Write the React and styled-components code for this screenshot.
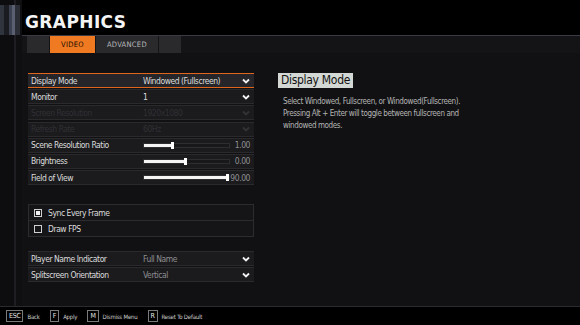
import styled, { createGlobalStyle } from "styled-components";

const GlobalStyle = createGlobalStyle`
    html, body { margin: 0; padding: 0; background: #000; }
    body { font-family: "DejaVu Sans Condensed", "DejaVu Sans", sans-serif; }
`;

const videoRows = [
    { label: "Display Mode", value: "Windowed (Fullscreen)", kind: "select", active: true },
    { label: "Monitor", value: "1", kind: "select" },
    { label: "Screen Resolution", value: "1920x1080", kind: "select", disabled: true },
    { label: "Refresh Rate", value: "60Hz", kind: "select", disabled: true },
    { label: "Scene Resolution Ratio", value: "1.00", kind: "slider", fill: 0.33 },
    { label: "Brightness", value: "0.00", kind: "slider", fill: 0.48 },
    { label: "Field of View", value: "90.00", kind: "slider", fill: 0.98 },
];

const hudRows = [
    { label: "Player Name Indicator", value: "Full Name" },
    { label: "Splitscreen Orientation", value: "Vertical" },
];

const keys = [
    { key: "ESC", text: "Back" },
    { key: "F", text: "Apply" },
    { key: "M", text: "Dismiss Menu" },
    { key: "R", text: "Reset To Default" },
];

function Chevron({ dim }) {
    return (
        <svg width="8" height="6" viewBox="0 0 8 6">
            <polyline points="1,1.5 4,4.5 7,1.5" fill="none" stroke={dim ? "#333336" : "#f2f2f2"} strokeWidth="1.8" />
        </svg>
    );
}

function Row({ row }) {
    return (
        <RowBox $active={row.active}>
            <Label $disabled={row.disabled}>{row.label}</Label>
            {row.kind === "slider" ? (
                <>
                    <Track>
                        <Fill style={{ width: `${row.fill * 100}%` }} />
                        <Knob style={{ left: `${row.fill * 100}%` }} />
                    </Track>
                    <SliderValue>{row.value}</SliderValue>
                </>
            ) : (
                <>
                    <Value $disabled={row.disabled} $muted={row.muted}>{row.value}</Value>
                    <Chevron dim={row.disabled} />
                </>
            )}
        </RowBox>
    );
}

export default function App() {
    return (
        <Page>
            <GlobalStyle />
            <Top>
                <Strip>
                    <StripBands />
                </Strip>
                <Main>
                    <Header>
                        <Title>GRAPHICS</Title>
                    </Header>
                    <Tabs>
                        <Tab $blank />
                        <Tab $active>VIDEO</Tab>
                        <Tab>ADVANCED</Tab>
                        <Tab $blank />
                    </Tabs>
                    <Content>
                        <Options>
                            <Group>
                                {videoRows.map(r => <Row key={r.label} row={r} />)}
                            </Group>

                            <CheckGroup>
                                <CheckRow>
                                    <Box><Dot /></Box>
                                    <Label>Sync Every Frame</Label>
                                </CheckRow>
                                <CheckRow $last>
                                    <Box />
                                    <Label>Draw FPS</Label>
                                </CheckRow>
                            </CheckGroup>

                            <Group $hud>
                                {hudRows.map(r => <Row key={r.label} row={{ ...r, kind: "select", muted: true }} />)}
                            </Group>
                        </Options>

                        <Info>
                            <InfoTitle>Display Mode</InfoTitle>
                            <InfoText>
                                Select Windowed, Fullscreen, or Windowed(Fullscreen). Pressing Alt + Enter will toggle between fullscreen and windowed modes.
                            </InfoText>
                        </Info>
                    </Content>
                </Main>
            </Top>
            <Footer>
                {keys.map(k => (
                    <Hint key={k.key}>
                        <Key>{k.key}</Key>
                        <span>{k.text}</span>
                    </Hint>
                ))}
            </Footer>
        </Page>
    );
}

const Page = styled.div`
    width: 580px;
    height: 325px;
    display: flex;
    flex-direction: column;
    background: #111113;
    overflow: hidden;
`;

const Top = styled.div`
    flex: 1;
    display: flex;
    min-height: 0;
`;

const Strip = styled.div`
    width: 22px;
    flex-shrink: 0;
    display: flex;
    flex-direction: column;
    padding-top: 5px;
    box-sizing: border-box;
    background: linear-gradient(90deg, #0d0d0f 0 14px, #1d1d22 14px 16px, #0f0f11 16px);
`;

const StripBands = styled.div`
    height: 30px;
    background: linear-gradient(90deg, #30343d 0 4px, #1a1c22 4px 9px, #3b4150 9px 12px, #5a6070 12px 15px, #2b2e36 15px 20px, transparent 20px);
`;

const Main = styled.div`
    flex: 1;
    display: flex;
    flex-direction: column;
`;

const Header = styled.div`
    height: 36px;
    box-sizing: border-box;
    background: #000;
    border-bottom: 1px solid #3a3b44;
    display: flex;
    align-items: flex-end;
    padding: 0 0 4px 3px;
`;

const Title = styled.div`
    font-family: "DejaVu Sans", sans-serif;
    font-weight: bold;
    font-size: 17px;
    letter-spacing: 0.4px;
    color: #f4f4f4;
    line-height: 1;
`;

const Tabs = styled.div`
    display: flex;
    gap: 1px;
    padding-left: 5px;
    height: 17px;
    background: #141416;
`;

const Tab = styled.div`
    width: ${p => (p.$blank ? "22px" : "auto")};
    padding: ${p => (p.$blank ? "0" : "0 11px")};
    background: ${p => (p.$active ? "#f07a22" : "#2a2a2d")};
    color: ${p => (p.$active ? "#1a0a00" : "#b8b8b8")};
    font-size: 7.5px;
    letter-spacing: 0.3px;
    display: flex;
    align-items: center;
`;

const Content = styled.div`
    display: flex;
    gap: 24px;
    padding: 20px 0 0 6px;
`;

const Options = styled.div`
    width: 226px;
    display: flex;
    flex-direction: column;
`;

const Group = styled.div`
    display: flex;
    flex-direction: column;
    gap: 1.2px;
    margin-top: ${p => (p.$hud ? "14px" : "0")};
`;

const RowBox = styled.div`
    height: 15px;
    display: flex;
    align-items: center;
    padding: 0 4px 0 3px;
    background: ${p => (p.$active ? "#26262a" : "#1b1b1e")};
    border-top: 1px solid ${p => (p.$active ? "#e0661e" : "#2a2a2d")};
    border-bottom: 1px solid ${p => (p.$active ? "#e0661e" : "#2a2a2d")};
    box-sizing: border-box;
    color: #dedede;
    font-size: 8.5px;
    letter-spacing: -0.45px;
`;

const Label = styled.span`
    width: 112px;
    color: ${p => (p.$disabled ? "#303033" : "#dcdcdc")};
    white-space: nowrap;
`;

const Value = styled.span`
    flex: 1;
    color: ${p => (p.$disabled ? "#303033" : p.$muted ? "#8e8e90" : "#dcdcdc")};
    white-space: nowrap;
`;

const Track = styled.div`
    position: relative;
    width: 85px;
    height: 3px;
    border: 1px solid #2e2e31;
    background: #18181a;
`;

const Fill = styled.div`
    height: 100%;
    background: #f4f4f4;
`;

const Knob = styled.div`
    position: absolute;
    top: -2px;
    width: 3px;
    height: 7px;
    margin-left: -1px;
    background: #fff;
`;

const SliderValue = styled.span`
    flex: 1;
    text-align: right;
    color: #8e8e90;
`;

const CheckGroup = styled.div`
    margin-top: 19px;
    border: 1px solid #2c2c2f;
    background: #151517;
    display: flex;
    flex-direction: column;
`;

const CheckRow = styled.div`
    height: 15px;
    display: flex;
    align-items: center;
    gap: 6px;
    padding-left: 5px;
    font-size: 8.5px;
    letter-spacing: -0.45px;
    border-bottom: ${p => (p.$last ? "none" : "1px solid #2c2c2f")};
`;

const Box = styled.div`
    width: 6px;
    height: 6px;
    border: 1px solid #cfcfcf;
    display: flex;
    align-items: center;
    justify-content: center;
`;

const Dot = styled.div`
    width: 4px;
    height: 4px;
    background: #f0f0f0;
`;

const Info = styled.div`
    width: 195px;
    display: flex;
    flex-direction: column;
    align-items: flex-start;
    gap: 8px;
`;

const InfoTitle = styled.div`
    background: #d4d8d4;
    color: #111;
    font-size: 12px;
    letter-spacing: -0.3px;
    padding: 1px 3px;
    line-height: 13px;
`;

const InfoText = styled.div`
    padding-left: 5px;
    font-size: 8px;
    letter-spacing: -0.4px;
    line-height: 12px;
    color: #b4b4b4;
`;

const Footer = styled.div`
    height: 18px;
    flex-shrink: 0;
    background: #000;
    border-top: 1px solid #2a2a30;
    display: flex;
    align-items: center;
    gap: 10px;
    padding-left: 6px;
    font-size: 6px;
    letter-spacing: -0.2px;
    color: #cfcfcf;
`;

const Hint = styled.div`
    display: flex;
    align-items: center;
    gap: 4px;
`;

const Key = styled.span`
    border: 1px solid #7a7a7a;
    padding: 1px 2px;
    font-size: 7px;
    letter-spacing: -0.3px;
    color: #e6e6e6;
`;
